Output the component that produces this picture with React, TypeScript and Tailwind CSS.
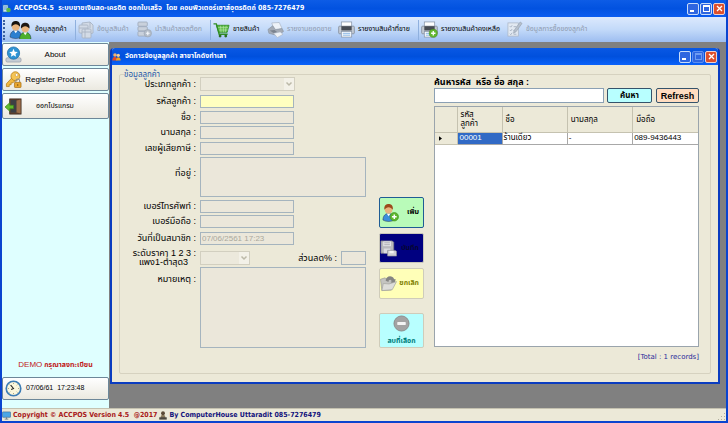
import type { ReactNode } from "react";
import { clsx } from "clsx";

/* ---------- icons ---------- */

function Person({ x, hair, shirt }: { x: number; hair: string; shirt: string }) {
  return (
    <g transform={`translate(${x} 0)`}>
      <path d="M1 18c0-5 3-7 6-7s6 2 6 7c-3 2-9 2-12 0z" fill={shirt} stroke="#1a2b48" strokeWidth=".5" />
      <path d="M5 11l2 3 2-3z" fill="#fff" />
      <circle cx="7" cy="7" r="4" fill="#e9b47e" />
      <path d="M2.500 7C2 2 5 1 7 1s5 1 4.500 6C10 6 9 4.500 7 4.500S4 6 2.500 7z" fill={hair} />
    </g>
  );
}

function UsersIcon() {
  return (
    <svg viewBox="0 0 24 20" className="h-[19px] w-[23px] shrink-0" aria-hidden="true">
      <Person x={0} hair="#16120f" shirt="#2c7fd0" />
      <g transform="translate(0 2)">
        <Person x={10} hair="#1d1714" shirt="#4caf2e" />
      </g>
    </svg>
  );
}

function AddUserIcon() {
  return (
    <svg viewBox="0 0 18 20" className="h-[19px] w-[17px] shrink-0" aria-hidden="true">
      <Person x={0} hair="#9c4a1c" shirt="#3c8fdc" />
      <circle cx="13" cy="14.500" r="4.500" fill="#5cb52c" stroke="#3b8a17" strokeWidth=".6" />
      <path d="M13 12v5M10.500 14.500h5" stroke="#fff" strokeWidth="1.600" />
    </svg>
  );
}

function BoxesIcon() {
  return (
    <svg viewBox="0 0 16 18" className="h-[18px] w-[16px] shrink-0" fill="#d3dbe6" stroke="#a9b4c4" strokeWidth=".9" aria-hidden="true">
      <path d="M4 2l8-1 3 3v8l-3 1H4z" />
      <rect x="1" y="4" width="9" height="8" rx="1" />
      <rect x="4" y="8" width="9" height="9" rx="1" />
      <path d="M1 7h9M4 11h9M7 8v9M12 1v6" fill="none" />
    </svg>
  );
}

function ServerAddIcon() {
  return (
    <svg viewBox="0 0 16 18" className="h-[17px] w-[15px] shrink-0" aria-hidden="true">
      <g fill="#c9d1dc" stroke="#9aa6b6" strokeWidth=".8">
        <rect x="1" y="1" width="10" height="4.500" rx="1" />
        <rect x="1" y="6" width="10" height="4.500" rx="1" />
        <rect x="1" y="11" width="10" height="5" rx="1" />
      </g>
      <circle cx="11.500" cy="13" r="4" fill="#b4bdc9" stroke="#97a2b0" strokeWidth=".6" />
      <path d="M11.500 11v4M9.500 13h4" stroke="#f4f7fb" strokeWidth="1.300" />
    </svg>
  );
}

function CartIcon() {
  return (
    <svg viewBox="0 0 18 17" className="h-[16px] w-[17px] shrink-0" aria-hidden="true">
      <path d="M3.500 3.500h13.500l-2 7.500H6z" fill="#5cbb45" stroke="#2f8d22" strokeWidth=".9" />
      <path d="M5 6h11M5.500 8.500h10M8 4l.5 7M11 4v7M14 4l-1 7" stroke="#c4ecb8" strokeWidth=".6" />
      <path d="M.5 2H3.500l3 11h9" fill="none" stroke="#2f8d22" strokeWidth="1.400" />
      <circle cx="7.500" cy="15" r="1.500" fill="#2a6e20" />
      <circle cx="13.500" cy="15" r="1.500" fill="#2a6e20" />
    </svg>
  );
}

function ScannerIcon() {
  return (
    <svg viewBox="0 0 18 17" className="h-[16px] w-[17px] shrink-0" aria-hidden="true">
      <path d="M5 1l8-.5L16 7 8 9z" fill="#eef2f8" stroke="#aab3c0" strokeWidth=".7" />
      <path d="M1 8l5-4 3 4 7-1 1.500 3-6 4.500L2 12z" fill="#a4abb6" stroke="#8b95a3" strokeWidth=".7" />
      <path d="M3 9l5-.5 3 2.500-3 1.500z" fill="#7b838f" />
      <path d="M7 12l7-1.500 3 2.500-6 3.500z" fill="#eef2f7" stroke="#aab3c0" strokeWidth=".6" />
    </svg>
  );
}

function PrinterIcon({ add = false }: { add?: boolean }) {
  return (
    <svg viewBox="0 0 18 18" className="h-[17px] w-[17px] shrink-0" aria-hidden="true">
      <rect x="3.500" y="1" width="11" height="6" fill="#fff" stroke="#8795a8" strokeWidth=".8" />
      <rect x=".7" y="5.500" width="16.600" height="8" rx="1" fill="#c3cad3" stroke="#7f8996" strokeWidth=".8" />
      <path d="M3.500 5.500h11v4.500h-11z" fill="#484d55" />
      <rect x="3.500" y="11" width="11" height="6" fill="#fff" stroke="#8795a8" strokeWidth=".8" />
      <path d="M5 13h8M5 15h8" stroke="#6ea5df" strokeWidth=".9" />
      {add && (
        <g>
          <circle cx="13" cy="13" r="4.300" fill="#63b830" stroke="#438b1c" strokeWidth=".6" />
          <path d="M13 10.700v4.600M10.700 13h4.600" stroke="#fff" strokeWidth="1.400" />
        </g>
      )}
    </svg>
  );
}

function ChecklistIcon() {
  return (
    <svg viewBox="0 0 17 18" className="h-[17px] w-[16px] shrink-0" aria-hidden="true">
      <rect x="1" y="2" width="11" height="14" fill="#e2e9f2" stroke="#abb6c5" strokeWidth=".8" />
      <path d="M3 5.500l1 1 1.500-2M3 9.500l1 1 1.500-2M3 13.500l1 1 1.500-2M7 6h3M7 10h2M7 14h3" fill="none" stroke="#98a4b5" strokeWidth=".8" />
      <path d="M14 1l2 1.500-6.500 9-2.500 1.500.5-3z" fill="#b7c0cc" stroke="#8f9bab" strokeWidth=".6" />
    </svg>
  );
}

function StarIcon() {
  return (
    <svg viewBox="0 0 18 18" className="h-[17px] w-[17px] shrink-0" aria-hidden="true">
      <rect x="1" y="12.500" width="16" height="4.500" rx="1.500" fill="#c5ccd4" stroke="#929ba6" strokeWidth=".7" />
      <circle cx="9" cy="7.500" r="6.500" fill="#2e93d4" stroke="#1d6da8" strokeWidth=".8" />
      <path d="M9 3l1.300 3 3.200.3-2.400 2.100.7 3.100L9 9.900l-2.800 1.600.7-3.100-2.400-2.100 3.200-.3z" fill="#fff" />
    </svg>
  );
}

function KeysIcon() {
  return (
    <svg viewBox="0 0 18 18" className="h-[17px] w-[17px] shrink-0" aria-hidden="true">
      <path d="M8 6.500L1.500 13.500v3h3v-2h2v-2h2l2.500-2.500" fill="#f2b93f" stroke="#b37b18" strokeWidth=".8" />
      <circle cx="11" cy="5.500" r="4.700" fill="#f6c555" stroke="#b37b18" strokeWidth=".8" />
      <circle cx="12.300" cy="4.200" r="1.500" fill="#fff" stroke="#b37b18" strokeWidth=".5" />
      <path d="M11.500 12v-1.500a2 2 0 014 0V12" fill="none" stroke="#8d8d8d" strokeWidth="1.100" />
      <rect x="10" y="12" width="7" height="5.500" rx=".7" fill="#e8a52e" stroke="#9f6a12" strokeWidth=".7" />
      <path d="M13.500 14v1.700" stroke="#704a0c" strokeWidth="1" />
    </svg>
  );
}

function DoorIcon() {
  return (
    <svg viewBox="0 0 18 18" className="h-[17px] w-[17px] shrink-0" aria-hidden="true">
      <rect x="5" y="1" width="12" height="16" fill="#6b4730" stroke="#3b2a1e" strokeWidth=".9" />
      <path d="M12 3l4.500-1.500v15L12 15z" fill="#9c6f4b" />
      <path d="M6 2h6v13.500H6z" fill="#3c3f44" />
      <path d="M0 9.500L5 5v2.700h4v3.600H5V14z" fill="#62bb2f" stroke="#3b8717" strokeWidth=".7" />
    </svg>
  );
}

function ClockIcon() {
  return (
    <svg viewBox="0 0 18 18" className="h-[17px] w-[17px] shrink-0" aria-hidden="true">
      <circle cx="9" cy="9" r="7.700" fill="#fbf7dc" stroke="#3c7cb4" strokeWidth="1.700" />
      <path d="M9 3v1.200M9 13.800V15M3 9h1.200M13.800 9H15M4.800 4.800l.8.800M12.400 12.400l.8.800M13.200 4.800l-.8.800M5.600 12.400l-.8.800" stroke="#8d8a6c" strokeWidth=".8" />
      <path d="M6 5.500L9 9 6.500 10" fill="none" stroke="#232323" strokeWidth="1.100" />
    </svg>
  );
}

function FloppyIcon() {
  return (
    <svg viewBox="0 0 18 18" className="h-[17px] w-[17px] shrink-0" aria-hidden="true">
      <path d="M1 1h12l1.500 1.500V14H1z" fill="#b9b9bd" stroke="#85858d" strokeWidth=".8" />
      <rect x="3.500" y="1.500" width="8" height="5" fill="#e8e8ea" />
      <path d="M4.500 3h6M4.500 5h6" stroke="#8f8f96" strokeWidth=".7" />
      <rect x="4" y="9" width="7" height="5" fill="#dcdce0" />
      <path d="M8 11h8l1.500 1v5H8z" fill="#d0d0d4" stroke="#8a8a92" strokeWidth=".7" />
      <rect x="10" y="11.500" width="4.500" height="2.500" fill="#f3f3f3" />
    </svg>
  );
}

function FolderIcon() {
  return (
    <svg viewBox="0 0 18 18" className="h-[17px] w-[17px] shrink-0" aria-hidden="true">
      <path d="M.5 4.500l5-1.500 1.500 1.500H14V8l-2 8-10 .5z" fill="#c4c4c0" stroke="#999992" strokeWidth=".7" />
      <path d="M6 6c0-5 7-6.500 9-1.500l1.500-.3L15.500 10 11 7.500l1.500-.8c-1-2.700-3.500-2-3.500.8z" fill="#858583" />
      <path d="M3.500 9l6 .5L17.500 7l-4.500 8.500-11 1z" fill="#dededa" stroke="#a3a39c" strokeWidth=".7" />
    </svg>
  );
}

function MinusIcon() {
  return (
    <svg viewBox="0 0 18 18" className="h-[17px] w-[17px] shrink-0" aria-hidden="true">
      <circle cx="9" cy="9" r="8" fill="#a3a3a3" stroke="#868686" strokeWidth=".9" />
      <rect x="4.500" y="7.500" width="9" height="3" rx=".5" fill="#f4f4f4" />
    </svg>
  );
}

function AppIcon() {
  return (
    <svg viewBox="0 0 9 9" className="size-[9px] shrink-0" aria-hidden="true">
      <rect x="1" y="1" width="5" height="7" fill="#c7e3f7" stroke="#2e6fa8" strokeWidth=".6" />
      <path d="M2 3h3M2 5h3" stroke="#2e6fa8" strokeWidth=".7" />
      <circle cx="6.500" cy="6" r="2.300" fill="#57b947" />
    </svg>
  );
}

function PeopleIcon() {
  return (
    <svg viewBox="0 0 9 9" className="size-[9px] shrink-0" aria-hidden="true">
      <circle cx="3" cy="3" r="1.800" fill="#f0b070" />
      <path d="M.3 8.500c0-5 5-5 5 0z" fill="#e04a2a" />
      <circle cx="6.300" cy="3.300" r="1.600" fill="#f5cf9b" />
      <path d="M4 8.500c0-4.500 4.700-4.500 4.700 0z" fill="#f0a020" />
    </svg>
  );
}

function MonitorIcon() {
  return (
    <svg viewBox="0 0 10 9" className="h-[9px] w-[9px] shrink-0" aria-hidden="true">
      <rect x=".5" y=".5" width="9" height="6" rx=".5" fill="#4aa6e6" stroke="#3d6c96" strokeWidth=".7" />
      <path d="M3 8.500h4M5 6.500v2" stroke="#6c7b88" strokeWidth="1" />
    </svg>
  );
}

function OperatorIcon() {
  return (
    <svg viewBox="0 0 9 10" className="h-[9px] w-[8px] shrink-0" aria-hidden="true">
      <circle cx="4.500" cy="2.500" r="2.200" fill="#5b4a36" />
      <path d="M2 6c0-2 5-2 5 0v2H2z" fill="#8a7a5c" />
      <rect x=".3" y="7" width="8.400" height="2.600" fill="#4a463e" />
    </svg>
  );
}

/* ---------- window pieces ---------- */

function CaptionButtons({ maxDim = false }: { maxDim?: boolean }) {
  const base = "flex size-[12px] items-center justify-center rounded-[2px] border";
  return (
    <div className="ml-auto flex shrink-0 gap-px">
      <button aria-label="Minimize" className={clsx(base, "border-[#c9dcf8] bg-[#2f66e0]")}>
        <span className="mt-1 mr-0.5 h-0.5 w-1 bg-white" />
      </button>
      <button aria-label="Maximize" className={clsx(base, "bg-[#2f66e0]", maxDim ? "border-[#5e8ff0]" : "border-[#c9dcf8]")}>
        <span className={clsx("size-[7px] border border-t-2", maxDim ? "border-[#6e9cf2]" : "border-white")} />
      </button>
      <button aria-label="Close" className={clsx(base, "border-[#f0d0cc] bg-[#dc4f2c]")}>
        <svg viewBox="0 0 7 7" className="size-[7px]" aria-hidden="true">
          <path d="M1 1l5 5M6 1L1 6" stroke="#fff" strokeWidth="1.300" />
        </svg>
      </button>
    </div>
  );
}

function ToolItem({ icon, children, dim = false, className }: { icon: ReactNode; children: ReactNode; dim?: boolean; className?: string }) {
  return (
    <button
      disabled={dim}
      className={clsx("flex h-full shrink-0 items-center gap-[3px] text-[7px] whitespace-nowrap", dim ? "text-[#8f9aae]" : "text-black", className)}
    >
      {icon}
      <span>{children}</span>
    </button>
  );
}

function ToolSeparator() {
  return <span className="h-5 w-px shrink-0 bg-[#8fb0de]" />;
}

function SideButton({ icon, children, className }: { icon: ReactNode; children: ReactNode; className?: string }) {
  return (
    <button
      className={clsx(
        "flex w-full shrink-0 items-center rounded-[2px] border border-[#6d8799] bg-linear-to-b from-white to-[#ebe9e0] pr-5 pl-0.5 whitespace-nowrap text-black",
        className,
      )}
    >
      {icon}
      {children}
    </button>
  );
}

function Field({ id, label, className, children }: { id: string; label: ReactNode; className?: string; children: ReactNode }) {
  return (
    <div className={clsx("grid grid-cols-[76px_166px] gap-x-1", className)}>
      <label htmlFor={id} className="self-center text-right text-[9px] leading-[9px] whitespace-nowrap">
        {label}
      </label>
      {children}
    </div>
  );
}

const box = "block border border-[#a5b4be] px-px text-[8px] outline-none";
const boxOff = "bg-[#ebe7da]";

function DropDown({ id, className }: { id: string; className: string }) {
  return (
    <div className={clsx("relative", className)}>
      <select id={id} disabled className="block h-full w-full appearance-none border border-[#d2cfc0] bg-[#ece9dc]" />
      <span className="pointer-events-none absolute inset-y-px right-px flex w-2.5 items-center justify-center bg-[#f3f1e8]">
        <svg viewBox="0 0 8 6" className="h-1.5 w-2" aria-hidden="true">
          <path d="M1.500 1.500L4 4l2.500-2.500" fill="none" stroke="#bcb9a8" strokeWidth="1.500" />
        </svg>
      </span>
    </div>
  );
}

/* ---------- page ---------- */

export default function App() {
  return (
    <div className="flex h-screen flex-col overflow-hidden border-x-2 border-b-2 border-[#0a44cf] bg-[#ece9d8] font-['Liberation_Sans','Noto_Sans_Thai','Noto_Sans',sans-serif] text-black">
      <header className="flex h-[17px] shrink-0 items-center gap-[3px] bg-linear-to-b from-[#0d5ce6] via-[#0252e0] to-[#0a5cf0] pr-px text-white">
        <AppIcon />
        <h1 className="font-['DejaVu_Sans_Condensed','Noto_Sans_Thai',sans-serif] text-[7px] font-bold whitespace-pre">
          ACCPOS4.5{"  "}ระบบขายเงินสด-เครดิต ออกใบเสร็จ{"  "}โดย คอมพิวเตอร์เฮาส์อุตรดิตถ์ 085-7276479
        </h1>
        <CaptionButtons />
      </header>

      <nav className="flex h-[25px] shrink-0 items-center bg-linear-to-b from-[#dce9fd] via-[#c3daf9] to-[#9dbdf0] pl-px">
        <span className="mr-1 h-5 border-l-2 border-dotted border-[#3a5f9f]" />
        <ToolItem icon={<UsersIcon />} className="w-[66px]">ข้อมูลลูกค้า</ToolItem>
        <ToolSeparator />
        <ToolItem icon={<BoxesIcon />} dim className="w-[61px] pl-0.5">ข้อมูลสินค้า</ToolItem>
        <ToolItem icon={<ServerAddIcon />} dim className="w-[73px]">นำสินค้าลงสต๊อก</ToolItem>
        <ToolSeparator />
        <ToolItem icon={<CartIcon />} className="w-[56px] pl-0.5">ขายสินค้า</ToolItem>
        <ToolItem icon={<ScannerIcon />} dim className="w-[71px]">รายงานยอดขาย</ToolItem>
        <ToolItem icon={<PrinterIcon />} className="w-[80px]">รายงานสินค้าที่ขาย</ToolItem>
        <ToolSeparator />
        <ToolItem icon={<PrinterIcon add />} className="w-[88px] pl-0.5">รายงานสินค้าคงเหลือ</ToolItem>
        <ToolItem icon={<ChecklistIcon />} dim>ข้อมูลการซื้อของลูกค้า</ToolItem>
      </nav>

      <div className="flex min-h-0 flex-1">
        <aside className="flex w-[107px] shrink-0 flex-col gap-0.5 bg-[#dfffff] pt-px pb-2">
          <SideButton icon={<StarIcon />} className="h-[23px] text-[8px]">
            <span className="flex-1 text-center">About</span>
          </SideButton>
          <SideButton icon={<KeysIcon />} className="h-[23px] text-[8px]">
            <span className="flex-1 text-center">Register Product</span>
          </SideButton>
          <SideButton icon={<DoorIcon />} className="h-[26px] text-[7px]">
            <span className="flex-1 text-center">ออกโปรแกรม</span>
          </SideButton>
          <p className="mt-auto mb-1 text-center text-[7px] leading-[12px] font-bold whitespace-nowrap text-[#c01818]">
            <span className="text-[8px] font-normal">DEMO</span> กรุณาลงทะเบียน
          </p>
          <SideButton icon={<ClockIcon />} className="h-[23px] text-[7px]">
            <span className="ml-1 whitespace-pre">07/06/61{"  "}17:23:48</span>
          </SideButton>
        </aside>

        <main className="flex min-w-0 flex-1 bg-[#808080] pt-1.5 pr-1.5 pb-6 pl-px">
          <section className="flex flex-1 flex-col rounded-t-[4px] border-x-2 border-b-2 border-[#0a3cc0] bg-[#ece9d8]">
            <div className="flex h-[17px] shrink-0 items-center gap-1 rounded-t-[3px] bg-linear-to-b from-[#0a58e4] via-[#0050dd] to-[#0a62fa] pr-px text-white">
              <PeopleIcon />
              <h2 className="text-[7px] font-bold">จัดการข้อมูลลูกค้า สาขาโกดังท่าเสา</h2>
              <CaptionButtons maxDim />
            </div>

            <div className="flex flex-1 flex-col px-[7px] pt-[7px] pb-2">
              <fieldset className="flex flex-1 rounded-[2px] border border-[#d6d2c0] pr-[11px]">
                <legend className="ml-1 h-[5px] text-[8px] leading-[5px] text-[#2457a8]">ข้อมูลลูกค้า</legend>

                <form className="flex flex-1" onSubmit={(e) => e.preventDefault()}>
                  <div className="w-[246px] shrink-0">
                    <Field id="type" label="ประเภทลูกค้า :">
                      <DropDown id="type" className="h-3.5 w-[95px]" />
                    </Field>
                    <Field id="code" label="รหัสลูกค้า :" className="mt-1">
                      <input id="code" className={clsx(box, "h-[13px] w-[94px] bg-[#ffffc0]")} />
                    </Field>
                    <Field id="name" label="ชื่อ :" className="mt-[3px]">
                      <input id="name" disabled className={clsx(box, boxOff, "h-[13px] w-[94px]")} />
                    </Field>
                    <Field id="surname" label="นามสกุล :" className="mt-0.5">
                      <input id="surname" disabled className={clsx(box, boxOff, "h-[13px] w-[94px]")} />
                    </Field>
                    <Field id="tax" label="เลขผู้เสียภาษี :" className="mt-[3px]">
                      <input id="tax" disabled className={clsx(box, boxOff, "h-[13px] w-[94px]")} />
                    </Field>
                    <Field id="address" label={<span className="block pb-2">ที่อยู่ :</span>} className="mt-0.5">
                      <textarea id="address" disabled className={clsx(box, boxOff, "h-10 w-full resize-none")} />
                    </Field>
                    <Field id="phone" label="เบอร์โทรศัพท์ :" className="mt-[3px]">
                      <input id="phone" disabled className={clsx(box, boxOff, "h-[13px] w-[94px]")} />
                    </Field>
                    <Field id="mobile" label="เบอร์มือถือ :" className="mt-0.5">
                      <input id="mobile" disabled className={clsx(box, boxOff, "h-[13px] w-[94px]")} />
                    </Field>
                    <Field id="since" label="วันที่เป็นสมาชิก :" className="mt-1">
                      <input id="since" disabled defaultValue="07/06/2561 17:23" className={clsx(box, boxOff, "h-[13px] w-[94px] text-[#aaa89c]")} />
                    </Field>
                    <Field
                      id="level"
                      className="mt-1 h-[15px]"
                      label={
                        <>
                          ระดับราคา 1 2 3 :
                          <br />
                          <span className="mr-2">แพง1-ต่ำสุด3</span>
                        </>
                      }
                    >
                      <div className="flex items-center">
                        <DropDown id="level" className="h-3.5 w-[50px]" />
                        <label htmlFor="discount" className="mr-1 ml-auto text-[9px] leading-[9px]">
                          ส่วนลด% :
                        </label>
                        <input id="discount" disabled className={clsx(box, boxOff, "h-3.5 w-[25px]")} />
                      </div>
                    </Field>
                    <Field id="note" label={<span className="block h-[66px]">หมายเหตุ :</span>} className="mt-[3px]">
                      <textarea id="note" disabled className={clsx(box, boxOff, "h-[81px] w-full resize-none")} />
                    </Field>
                  </div>

                  <div className="ml-[13px] flex w-[45px] shrink-0 flex-col pt-[120px] text-[7px] font-bold">
                    <button className="flex h-[31px] items-center justify-between rounded-[2px] border border-[#1f5c94] bg-[#b9fbb9] pr-1 pl-0.5">
                      <AddUserIcon />
                      เพิ่ม
                    </button>
                    <button disabled className="mt-[5px] flex h-[30px] items-center justify-between rounded-[2px] border border-[#c9c7ba] bg-[#000080] pr-1 text-[#050530]">
                      <FloppyIcon />
                      บันทึก
                    </button>
                    <button disabled className="mt-[5px] flex h-[31px] items-center justify-between rounded-[2px] border border-[#cfccba] bg-[#ffffb8] pr-1 text-[#808000]">
                      <FolderIcon />
                      ยกเลิก
                    </button>
                    <button disabled className="mt-[14px] flex h-[35px] flex-col items-center justify-between rounded-[2px] border border-[#cfccba] bg-[#b8ffff] pt-px leading-[12px] whitespace-nowrap text-[#00807c]">
                      <MinusIcon />
                      ลบที่เลือก
                    </button>
                  </div>

                  <div className="ml-2.5 flex min-w-0 flex-1 flex-col">
                    <label htmlFor="search" className="h-[11px] text-[9px] leading-[11px] font-bold whitespace-pre">
                      ค้นหารหัส{"  "}หรือ ชื่อ สกุล :
                    </label>
                    <div className="flex h-[15px]">
                      <input id="search" className="min-w-0 flex-1 border border-[#8ba0b4] bg-white px-0.5 text-[8px] outline-none" />
                      <button className="ml-[3px] w-[45px] rounded-[2px] border border-[#35536b] bg-[#b8ffff] text-[8px] leading-[12px] font-bold">ค้นหา</button>
                      <button className="ml-1 w-[43px] rounded-[2px] border border-[#35536b] bg-[#ffdcc0] text-[9px] leading-[12px] font-bold">Refresh</button>
                    </div>

                    <div className="mt-[3px] h-[241px] border border-[#9aa4ac] bg-white">
                      <table className="w-full table-fixed border-collapse text-left text-[8px]">
                        <colgroup>
                          <col className="w-[22px]" />
                          <col className="w-[45px]" />
                          <col />
                          <col />
                          <col />
                        </colgroup>
                        <thead>
                          <tr className="h-[25px] bg-[#ece9d8] leading-[9px]">
                            <th className="border-r border-b border-[#c5c2b0]" />
                            <th className="border-r border-b border-[#c5c2b0] pl-[3px] font-normal">รหัส<br />ลูกค้า</th>
                            <th className="border-r border-b border-[#c5c2b0] pl-[3px] font-normal">ชื่อ</th>
                            <th className="border-r border-b border-[#c5c2b0] pl-[3px] font-normal">นามสกุล</th>
                            <th className="border-b border-[#c5c2b0] pl-[3px] font-normal">มือถือ</th>
                          </tr>
                        </thead>
                        <tbody>
                          <tr className="h-3 leading-[10px]">
                            <td className="border-r border-b border-[#c5c2b0] bg-[#ece9d8]">
                              <svg viewBox="0 0 4 6" className="ml-1 h-[5px] w-[3px]" aria-hidden="true">
                                <path d="M0 0l4 3-4 3z" fill="#000" />
                              </svg>
                            </td>
                            <td className="border-r border-b border-[#a8a8a8] bg-[#316ac5] pl-0.5 text-white">00001</td>
                            <td className="border-r border-b border-[#a8a8a8] pl-px">ร้านเดียว</td>
                            <td className="border-r border-b border-[#a8a8a8] pl-px">-</td>
                            <td className="border-b border-[#a8a8a8] pl-px">089-9436443</td>
                          </tr>
                        </tbody>
                      </table>
                    </div>
                    <p className="mt-1 text-right font-['DejaVu_Sans',sans-serif] text-[7px] leading-[12px] text-[#2a2a9a]">[Total : 1 records]</p>
                  </div>
                </form>
              </fieldset>
            </div>
          </section>
        </main>
      </div>

      <footer className="flex h-[13px] shrink-0 items-center gap-0.5 border-t border-[#c4c1b0] bg-[#ece9d8] font-['DejaVu_Sans_Condensed',sans-serif] text-[7px] font-bold whitespace-pre">
        <MonitorIcon />
        <span className="text-[#a81818]">Copyright © ACCPOS Version 4.5{"  "}@2017</span>
        <OperatorIcon />
        <span className="text-[#12127c]">By ComputerHouse Uttaradit 085-7276479</span>
        <svg viewBox="0 0 8 8" className="mt-auto ml-auto size-2" fill="#b0ad9c" aria-hidden="true">
          <path d="M6 0h1v1H6zM3 3h1v1H3zM6 3h1v1H6zM0 6h1v1H0zM3 6h1v1H3zM6 6h1v1H6z" />
        </svg>
      </footer>
    </div>
  );
}
